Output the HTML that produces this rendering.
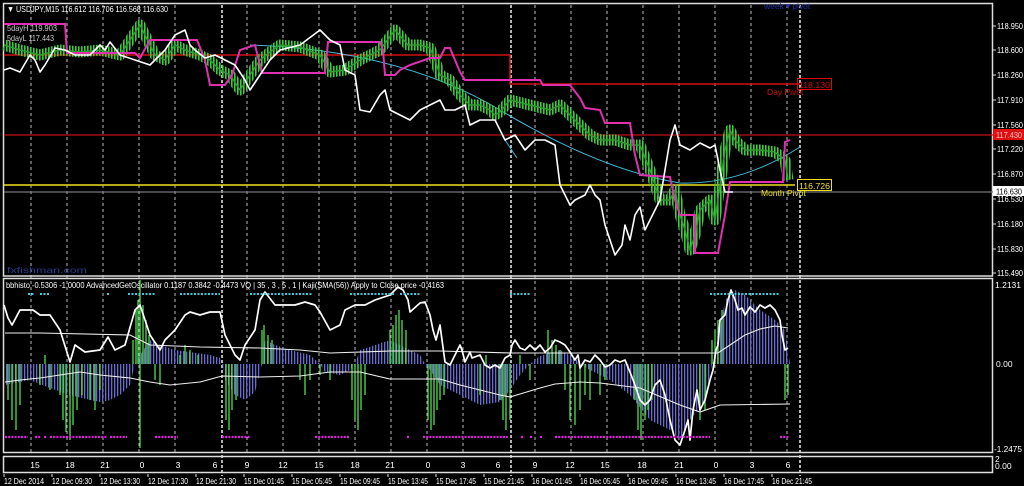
<!DOCTYPE html>
<html><head><meta charset="utf-8"><style>
html,body{margin:0;padding:0;background:#000;width:1024px;height:486px;overflow:hidden}
svg{display:block}
text{font-family:"Liberation Sans",sans-serif;font-size:8.5px}
</style></head><body>
<svg width="1024" height="486" viewBox="0 0 1024 486" xmlns="http://www.w3.org/2000/svg">
<defs>
<pattern id="pur" width="3" height="10" patternUnits="userSpaceOnUse"><rect x="0" y="0" width="1.3" height="10" fill="#6a6ad0"/></pattern>
<pattern id="grn" width="3" height="10" patternUnits="userSpaceOnUse"><rect x="0" y="0" width="1.6" height="10" fill="#3ccc3c"/></pattern>
<mask id="pm" maskUnits="userSpaceOnUse" x="0" y="0" width="1024" height="486">
<polyline fill="none" stroke="#fff" stroke-width="11" stroke-linejoin="round" points="4,45 20,50 40,55 60,50 80,52 100,50 120,55 130,40 140,25 145,35 155,55 165,60 175,45 185,50 200,55 210,60 220,70 230,75 240,90 250,75 260,60 270,52 280,45 300,47 320,55 330,72 345,70 360,60 380,50 395,30 408,45 420,45 430,48 435,60 440,75 450,80 460,95 470,105 480,105 490,110 495,115 500,112 510,100 530,105 550,110 560,105 570,115 580,125 590,135 600,140 615,140 630,145 640,145 650,170 660,200 670,200 675,190 680,215 685,230 690,250 695,235 700,210 710,200 715,220 720,185 725,150 730,130 735,140 745,150 760,150 775,152 785,160 788,180"/>
</mask>
</defs>
<rect width="1024" height="486" fill="#000"/>
<g stroke="#bbb" stroke-width="1" stroke-dasharray="3,3">
<path d="M31,5V453M67,5V453M103,5V453M139,5V453M175,5V453M247,5V453M283,5V453M319,5V453M355,5V453M391,5V453M427,5V453M463,5V453M535,5V453M571,5V453M607,5V453M643,5V453M679,5V453M715,5V453M751,5V453M787,5V453"/>
</g>
<g stroke="#eee" stroke-width="1.5" stroke-dasharray="3,2">
<path d="M222,5V476M511,5V476M800,5V476"/>
</g>
<g fill="none" stroke="#ddd" stroke-width="1.5">
<rect x="3.5" y="3.5" width="989" height="272.5"/>
<rect x="3.5" y="278.5" width="989" height="174"/>
<rect x="3.5" y="456.5" width="989" height="16"/>
</g>
<path d="M4,55H510V84H800" stroke="#d01010" stroke-width="1.5" fill="none"/>
<path d="M4,135H993" stroke="#c01010" stroke-width="1.3"/>
<path d="M4,192H993" stroke="#777" stroke-width="1.3"/>
<path d="M4,185H795" stroke="#f0e020" stroke-width="1.6"/>
<path d="M250,45 Q 400,50 500,110 T 680,183 Q 740,185 800,147" stroke="#40b8d8" stroke-width="1" fill="none"/>
<path d="M505,140 L517,158" stroke="#40b8d8" stroke-width="1"/>
<!-- green price bars -->
<rect x="0" y="0" width="1024" height="280" fill="url(#grn)" mask="url(#pm)"/>
<polyline fill="none" stroke="#2aa02a" stroke-width="1.5" stroke-linejoin="round" points="4,45 20,50 40,55 60,50 80,52 100,50 120,55 130,40 140,25 145,35 155,55 165,60 175,45 185,50 200,55 210,60 220,70 230,75 240,90 250,75 260,60 270,52 280,45 300,47 320,55 330,72 345,70 360,60 380,50 395,30 408,45 420,45 430,48 435,60 440,75 450,80 460,95 470,105 480,105 490,110 495,115 500,112 510,100 530,105 550,110 560,105 570,115 580,125 590,135 600,140 615,140 630,145 640,145 650,170 660,200 670,200 675,190 680,215 685,230 690,250 695,235 700,210 710,200 715,220 720,185 725,150 730,130 735,140 745,150 760,150 775,152 785,160 788,180"/>
<polyline fill="none" stroke="#e030b0" stroke-width="2" points="4,24 65,24 67,53 135,53 140,58 150,40 197,40 205,60 210,85 225,85 232,75 240,50 255,45 262,73 325,73 328,42 380,42 383,50 385,75 395,75 400,70 410,65 430,58 440,58 445,48 450,48 455,60 460,72 465,80 540,80 543,85 570,85 580,98 585,108 600,110 605,123 630,123 635,155 640,175 670,177 675,200 680,215 695,215 695,253 718,253 725,215 730,182 783,182 785,142 790,140"/>
<polyline fill="none" stroke="#fff" stroke-width="1.6" stroke-linejoin="round" points="4,70 10,68 20,72 30,55 35,60 40,72 45,65 55,48 65,50 75,55 90,55 100,45 105,50 110,42 120,55 135,60 150,65 165,50 175,35 185,30 190,45 195,50 205,58 215,55 225,60 235,65 245,80 250,90 260,75 270,60 280,50 300,45 320,30 330,40 340,45 345,70 355,75 360,110 370,112 380,95 385,90 390,110 400,115 410,120 420,110 430,105 440,100 445,110 455,110 465,105 470,125 480,120 495,120 505,140 515,135 525,150 535,140 545,140 555,145 560,185 570,205 575,200 585,195 590,185 595,195 600,200 605,225 615,255 622,245 625,225 630,240 635,215 640,207 645,230 655,210 660,200 665,170 670,140 675,125 680,145 690,150 700,143 710,148 715,145 720,170 725,192 733,192"/>
<g fill="#fff">
<text x="7" y="12" font-size="8" textLength="161" lengthAdjust="spacingAndGlyphs">▼ USDJPY,M15  116.612 116.706 116.568 116.630</text>
<text x="7" y="31" font-size="8" fill="#ccc" textLength="50" lengthAdjust="spacingAndGlyphs">5dayH 119.903</text>
<text x="7" y="41" font-size="8" fill="#ccc" textLength="47" lengthAdjust="spacingAndGlyphs">5dayL 117.443</text>
<text x="7" y="273" font-size="9" fill="#283c8c" textLength="80" lengthAdjust="spacingAndGlyphs">fxfishman.com</text>
<text x="764" y="9" font-size="8" fill="#2030a0">week▼pivot</text>
<text x="767" y="95" font-size="11" fill="#d01010">Day Pivot</text>
<rect x="797.5" y="78.5" width="34" height="11" fill="none" stroke="#d01010"/>
<text x="799" y="88" font-size="10" fill="#d01010" textLength="31" lengthAdjust="spacingAndGlyphs">118.130</text>
<text x="761" y="196" font-size="11" fill="#f0e020">Month Pivot</text>
<rect x="797.5" y="179.5" width="34" height="11" fill="#000" stroke="#f0e020"/>
<text x="799" y="189" font-size="10" fill="#f0e020" textLength="31" lengthAdjust="spacingAndGlyphs">116.726</text>
<g font-size="8">
<text x="997" y="29" textLength="26" lengthAdjust="spacingAndGlyphs">118.950</text><text x="997" y="53" textLength="26" lengthAdjust="spacingAndGlyphs">118.600</text><text x="997" y="78" textLength="26" lengthAdjust="spacingAndGlyphs">118.260</text><text x="997" y="103" textLength="26" lengthAdjust="spacingAndGlyphs">117.910</text><text x="997" y="128" textLength="26" lengthAdjust="spacingAndGlyphs">117.560</text><text x="997" y="152" textLength="26" lengthAdjust="spacingAndGlyphs">117.220</text><text x="997" y="177" textLength="26" lengthAdjust="spacingAndGlyphs">116.870</text><text x="997" y="202" textLength="26" lengthAdjust="spacingAndGlyphs">116.530</text><text x="997" y="227" textLength="26" lengthAdjust="spacingAndGlyphs">116.180</text><text x="997" y="252" textLength="26" lengthAdjust="spacingAndGlyphs">115.830</text><text x="997" y="276" textLength="26" lengthAdjust="spacingAndGlyphs">115.490</text>
</g>
</g>
<g stroke="#ddd"><path d="M993,26h3M993,50h3M993,75h3M993,100h3M993,125h3M993,149h3M993,174h3M993,199h3M993,224h3M993,249h3M993,273h3"/></g>
<rect x="993" y="129" width="31" height="11" fill="#e01010"/>
<text x="996" y="138" font-size="8" fill="#ffc0c0" textLength="26" lengthAdjust="spacingAndGlyphs">117.430</text>
<rect x="993" y="186" width="31" height="10" fill="#fff"/>
<text x="996" y="194.5" font-size="8" fill="#000" textLength="26" lengthAdjust="spacingAndGlyphs">116.630</text>
<!-- lower panel -->
<text x="6" y="288" font-size="7.6" fill="#fff" textLength="438" lengthAdjust="spacingAndGlyphs">bbhisto -0.5306 -1.0000  AdvancedGetOscillator 0.1187 0.3842 -0.4473  VQ |  35 , 3 , 5 , 1  |  Kaji(SMA(56)) Apply to Close price -0.4163</text>
<polygon fill="url(#pur)" points="5,364 5,385 30,380 50,388 70,395 90,400 100,402 110,400 120,395 130,385 135,364 140,355 150,340 160,345 175,350 190,352 210,355 220,358 222,364 225,380 235,395 245,400 255,392 262,364 265,340 275,345 290,350 310,355 320,364 325,372 340,375 350,370 355,364 360,350 375,345 390,340 400,345 410,350 420,355 425,364 430,370 440,385 460,395 480,405 500,402 510,390 520,375 530,364 540,356 560,350 575,358 580,364 590,370 610,380 630,395 650,420 670,430 680,440 690,420 705,400 712,364 720,330 725,300 735,290 745,295 760,310 775,320 785,330 790,364"/>
<g stroke="#50e050" stroke-width="1.3">
<path d="M140,280V448M8,364V400M12,364V420M16,364V430M20,364V405M40,364V385M45,355V364M50,364V390M60,364V395M63,364V420M66,364V432M70,364V440M73,364V425M77,364V410M82,364V395M90,364V400M95,364V410M100,364V390M133,340V364M136,310V364M138,300V364M143,305V364M146,320V364M149,335V364M155,364V380M160,364V385M180,355V364M185,345V364M190,350V364M198,355V364M226,364V420M229,364V430M232,364V410M236,364V400M262,330V364M264,325V364M268,335V364M272,340V364M300,364V380M305,364V395M310,364V380M320,364V375M330,364V380M352,364V400M355,364V420M358,364V430M361,364V410M365,364V395M390,330V364M393,325V364M396,315V364M399,310V364M402,320V364M406,330V364M428,364V420M431,364V430M434,364V425M437,364V410M440,364V400M444,364V395M480,364V395M486,355V364M500,364V400M503,364V420M506,364V430M510,364V420M520,355V364M530,364V380M548,330V364M552,340V364M556,345V364M560,350V364M565,364V390M570,364V420M575,364V425M580,364V410M585,364V395M590,364V400M600,364V395M605,364V380M635,364V400M638,364V430M641,364V440M645,364V420M648,364V410M652,364V400M700,364V420M705,364V410M712,340V364M715,330V364M718,320V364M722,310V364M785,364V400M788,364V395"/>
</g>
<polyline fill="none" stroke="#eee" stroke-width="1.1" points="5,333 40,333 130,335 150,345 200,347 260,348 300,350 330,353 390,351 440,351 510,353 630,353 718,353 730,345 745,335 760,329 775,326 788,328"/>
<polyline fill="none" stroke="#eee" stroke-width="1.1" points="5,382 20,380 40,378 60,375 80,372 100,375 130,378 150,382 170,385 200,382 222,376 260,377 300,376 330,372 360,372 390,379 440,379 460,385 480,390 500,395 510,397 520,394 540,388 555,384 580,382 600,383 640,388 680,405 700,412 720,405 790,404"/>
<polyline fill="none" stroke="#fff" stroke-width="1.7" stroke-linejoin="round" points="4,305 8,318 12,325 20,310 33,310 40,315 50,315 60,330 70,362 75,345 85,352 100,350 108,337 115,350 125,345 135,310 140,305 150,335 160,350 165,340 175,330 185,315 190,312 200,315 210,312 220,312 225,335 235,355 240,360 245,345 255,330 260,300 265,292 275,305 285,305 295,305 305,302 315,305 320,312 330,330 340,325 345,310 355,305 365,305 375,300 390,295 398,287 403,290 408,300 410,312 420,303 425,302 430,315 433,330 436,340 440,325 442,340 445,362 450,365 455,355 460,345 462,350 465,362 470,352 472,358 480,355 485,365 490,368 495,365 500,368 505,358 510,355 512,345 515,340 520,348 525,350 530,345 535,350 540,345 545,352 550,348 555,340 560,342 565,345 570,352 575,360 578,355 580,368 585,360 590,362 595,355 600,360 605,367 610,365 615,360 620,362 625,360 630,372 635,385 640,400 645,405 650,400 655,385 660,380 665,395 670,420 675,440 680,445 685,430 688,420 690,440 693,410 697,390 700,410 705,400 710,380 713,370 716,350 718,345 720,320 725,315 728,300 731,290 735,300 738,310 742,308 745,315 750,307 755,312 760,305 765,308 770,305 775,310 780,320 782,335 785,350 788,348"/>
<g stroke="#40c8d8" stroke-width="2" stroke-dasharray="2,1.5">
<path d="M28,294H35M40,294H50M107,294H110M128,294H155M180,294H220M250,294H313M350,294H395M400,294H420M510,294H530M710,294H780"/>
</g>
<g stroke="#e020e0" stroke-width="2.2" stroke-dasharray="2,1.2">
<path d="M5,437H28M35,437H41M44,437H47M50,437H107M110,437H127M155,437H178M222,437H250M315,437H350M407,437H410M423,437H508M521,437H524M530,437H533M540,437H543M555,437H710M780,437H789"/>
</g>
<g fill="#fff">
<text x="995" y="288" font-size="8">1.2131</text>
<text x="996" y="367" font-size="8">0.00</text>
<text x="994" y="452" font-size="8" textLength="28" lengthAdjust="spacingAndGlyphs">-1.2475</text>
<text x="995" y="462" font-size="6">2</text>
<text x="995" y="469" font-size="8">0.00</text>
<g font-size="10" text-anchor="middle">
<text x="35" y="468">15</text><text x="70" y="468">18</text><text x="105" y="468">21</text><text x="142" y="468">0</text><text x="178" y="468">3</text><text x="215" y="468">6</text><text x="247" y="468">9</text><text x="283" y="468">12</text><text x="319" y="468">15</text><text x="355" y="468">18</text><text x="390" y="468">21</text><text x="428" y="468">0</text><text x="463" y="468">3</text><text x="498" y="468">6</text><text x="535" y="468">9</text><text x="570" y="468">12</text><text x="605" y="468">15</text><text x="642" y="468">18</text><text x="679" y="468">21</text><text x="716" y="468">0</text><text x="752" y="468">3</text><text x="788" y="468">6</text>
</g>
<g font-size="7.6">
<text x="4" y="484" textLength="40" lengthAdjust="spacingAndGlyphs">12 Dec 2014</text><text x="52" y="484" textLength="40" lengthAdjust="spacingAndGlyphs">12 Dec 09:30</text><text x="100" y="484" textLength="40" lengthAdjust="spacingAndGlyphs">12 Dec 13:30</text><text x="148" y="484" textLength="40" lengthAdjust="spacingAndGlyphs">12 Dec 17:30</text><text x="196" y="484" textLength="40" lengthAdjust="spacingAndGlyphs">12 Dec 21:30</text><text x="244" y="484" textLength="40" lengthAdjust="spacingAndGlyphs">15 Dec 01:45</text><text x="292" y="484" textLength="40" lengthAdjust="spacingAndGlyphs">15 Dec 05:45</text><text x="340" y="484" textLength="40" lengthAdjust="spacingAndGlyphs">15 Dec 09:45</text><text x="388" y="484" textLength="40" lengthAdjust="spacingAndGlyphs">15 Dec 13:45</text><text x="436" y="484" textLength="40" lengthAdjust="spacingAndGlyphs">15 Dec 17:45</text><text x="484" y="484" textLength="40" lengthAdjust="spacingAndGlyphs">15 Dec 21:45</text><text x="532" y="484" textLength="40" lengthAdjust="spacingAndGlyphs">16 Dec 01:45</text><text x="580" y="484" textLength="40" lengthAdjust="spacingAndGlyphs">16 Dec 05:45</text><text x="628" y="484" textLength="40" lengthAdjust="spacingAndGlyphs">16 Dec 09:45</text><text x="676" y="484" textLength="40" lengthAdjust="spacingAndGlyphs">16 Dec 13:45</text><text x="724" y="484" textLength="40" lengthAdjust="spacingAndGlyphs">16 Dec 17:45</text><text x="772" y="484" textLength="40" lengthAdjust="spacingAndGlyphs">16 Dec 21:45</text>
</g>
</g>
<g stroke="#ddd"><path d="M4,474v3M52,474v3M100,474v3M148,474v3M196,474v3M244,474v3M292,474v3M340,474v3M388,474v3M436,474v3M484,474v3M532,474v3M580,474v3M628,474v3M676,474v3M724,474v3M772,474v3"/></g>
</svg>
</body></html>
